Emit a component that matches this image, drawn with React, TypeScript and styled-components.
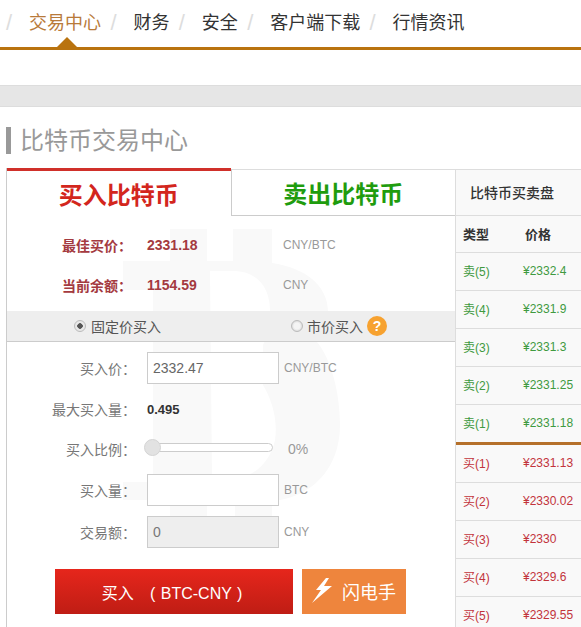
import React from "react";
import styled, { createGlobalStyle } from "styled-components";

const Global = createGlobalStyle`
  html, body { margin: 0; padding: 0; background: #fff; }
  body { font-family: "Liberation Sans", "Noto Sans CJK SC", sans-serif; overflow: hidden; }
  * { box-sizing: border-box; }
`;

const Page = styled.div`
  width: 581px;
  height: 627px;
  overflow: hidden;
`;

const Nav = styled.nav`
  height: 50px;
  border-bottom: 3px solid #b9730f;
  display: flex;
  align-items: flex-start;
  padding: 12px 0 0 6px;
`;

const NavItem = styled.div<{ $active?: boolean }>`
  position: relative;
  display: flex;
  align-items: center;
  height: 22px;
  font-size: 18px;
  line-height: 22px;
  color: ${(p) => (p.$active ? "#b87a3a" : "#333")};
  white-space: nowrap;
`;

const Slash = styled.span`
  font-size: 22px;
  color: #ddd;
  width: 23px;
  font-weight: 300;
`;

const Gap = styled.span`
  width: 9.4px;
`;

const Caret = styled.span`
  position: absolute;
  left: 28px;
  bottom: -13px;
  width: 0;
  height: 0;
  border-left: 10px solid transparent;
  border-right: 10px solid transparent;
  border-bottom: 10px solid #b9730f;
`;

const Band = styled.div`
  margin-top: 35px;
  height: 22px;
  background: #e6e6e6;
  border-top: 1px solid #ddd;
  border-bottom: 1px solid #ddd;
`;

const Title = styled.h1`
  margin: 20px 0 0 6px;
  height: 27px;
  padding-left: 9px;
  border-left: 5px solid #999;
  font-size: 24px;
  line-height: 27px;
  font-weight: 400;
  color: #999;
  white-space: nowrap;
`;

const Columns = styled.div`
  margin: 14px 0 0 6px;
  display: flex;
  align-items: flex-start;
`;

const Trade = styled.section`
  position: relative;
  width: 449px;
  height: 460px;
  border-left: 1px solid #ccc;
  flex: none;
`;

const Watermark = styled.svg`
  position: absolute;
  left: 0;
  top: 0;
  width: 449px;
  height: 460px;
`;

const Tabs = styled.div`
  position: relative;
  display: flex;
  height: 48px;
`;

const Tab = styled.div<{ $active?: boolean; $color: string }>`
  width: ${(p) => (p.$active ? "224px" : "225px")};
  height: ${(p) => (p.$active ? "48px" : "47px")};
  margin-top: ${(p) => (p.$active ? "0" : "1px")};
  border-top: ${(p) => (p.$active ? "3px solid #d0302a" : "1px solid #ddd")};
  border-left: ${(p) => (p.$active ? "none" : "1px solid #ccc")};
  border-bottom: ${(p) => (p.$active ? "none" : "1px solid #ccc")};
  background: #fff;
  color: ${(p) => p.$color};
  font-size: 24px;
  font-weight: 700;
  display: flex;
  align-items: center;
  justify-content: center;
`;

const Info = styled.div`
  position: relative;
  padding: 9px 0 6px;
`;

const InfoRow = styled.div`
  height: 40px;
  display: flex;
  align-items: center;
`;

const InfoLabel = styled.div`
  width: 125px;
  text-align: right;
  font-size: 14px;
  font-weight: 700;
  color: #a43a40;
  white-space: nowrap;
`;

const InfoValue = styled.div`
  width: 140px;
  padding-left: 15px;
  font-size: 14px;
  font-weight: 700;
  color: #a43a40;
`;

const Unit = styled.div`
  font-size: 12px;
  color: #999;
  padding-left: 5px;
  white-space: nowrap;
`;

const InfoUnit = styled(Unit)`
  padding-left: 11px;
`;

const TypeBar = styled.div`
  position: relative;
  display: grid;
  grid-template-columns: 284px 1fr;
  height: 31px;
  background: #eee;
  border-bottom: 1px solid #ccc;
  align-items: center;
  font-size: 14px;
  color: #555;
`;

const TypeOption = styled.label<{ $first?: boolean }>`
  display: flex;
  align-items: center;
  gap: ${(p) => (p.$first ? "5px" : "4px")};
  padding-left: ${(p) => (p.$first ? "67px" : "0")};
  white-space: nowrap;
`;

const Radio = styled.span<{ $on?: boolean }>`
  width: 12px;
  height: 12px;
  border-radius: 50%;
  border: 1px solid #bbb;
  background: ${(p) =>
    p.$on
      ? "radial-gradient(circle, #555 0 2.5px, #e8e8e8 3px)"
      : "radial-gradient(circle, #f4f4f4 0 3px, #dedede 5px)"};
  flex: none;
`;

const Help = styled.span`
  width: 20px;
  height: 20px;
  border-radius: 50%;
  background: #f7a230;
  color: #fff;
  font-size: 14px;
  font-weight: 700;
  display: inline-flex;
  align-items: center;
  justify-content: center;
`;

const Form = styled.div`
  position: relative;
  padding-top: 10px;
  display: flex;
  flex-direction: column;
  gap: 9px;
`;

const FormRow = styled.div<{ $shift?: number }>`
  height: 32px;
  margin-top: ${(p) => p.$shift ?? 0}px;
  display: flex;
  align-items: center;
`;

const FormLabel = styled.div`
  width: 129px;
  text-align: right;
  font-size: 14px;
  color: #777;
  white-space: nowrap;
`;

const Field = styled.input`
  margin-left: 11px;
  width: 132px;
  height: 32px;
  border: 1px solid #ccc;
  background: ${(p) => (p.disabled ? "#eee" : "#fff")};
  padding: 0 5px;
  font: 14px "Liberation Sans", sans-serif;
  color: #666;
  outline: none;
  opacity: 1;
  &:disabled { color: #777; -webkit-text-fill-color: #777; }
`;

const MaxValue = styled.div`
  margin-left: 11px;
  font-size: 13px;
  font-weight: 700;
  color: #333;
`;

const Slider = styled.div`
  position: relative;
  margin: -3px 0 0 11px;
  width: 126px;
  height: 9px;
  border: 1px solid #ccc;
  border-radius: 5px;
  background: #fff;
`;

const Thumb = styled.span`
  position: absolute;
  left: -4px;
  top: -5px;
  width: 17px;
  height: 17px;
  border-radius: 50%;
  background: #e2e2e2;
  border: 1px solid #d4d4d4;
`;

const Percent = styled.div`
  margin-left: 15px;
  font-size: 14px;
  color: #999;
`;

const Actions = styled.div`
  position: relative;
  margin-top: 21px;
  padding-left: 48px;
  display: flex;
  gap: 9px;
`;

const BuyButton = styled.button`
  width: 238px;
  height: 45px;
  border: none;
  padding: 0 4px 0 0;
  background: linear-gradient(#e6261c, #bf1d14);
  color: #fff;
  font: 16px "Liberation Sans", "Noto Sans CJK SC", sans-serif;
  white-space: pre;
  word-spacing: 1px;
`;

const FlashButton = styled.button`
  width: 104px;
  height: 45px;
  border: none;
  background: #ee853d;
  color: #fff;
  font: 18px "Liberation Sans", "Noto Sans CJK SC", sans-serif;
  display: flex;
  align-items: center;
  gap: 10px;
  padding: 0 0 2px 10px;
`;

const Book = styled.aside`
  flex: 1;
  border-left: 1px solid #ddd;
  margin-top: 1px;
  background: #f9f9f9;
  border-top: 1px solid #ddd;
`;

const BookTitle = styled.div`
  height: 46px;
  padding: 0 0 2px 14px;
  display: flex;
  align-items: center;
  font-size: 14px;
  font-weight: 500;
  color: #333;
  border-bottom: 1px solid #ddd;
  white-space: nowrap;
`;

const BookRow = styled.div<{ $color?: string; $strong?: boolean; $thick?: boolean }>`
  height: ${(p) => (p.$thick ? "40px" : p.$strong ? "37px" : "38px")};
  display: grid;
  grid-template-columns: ${(p) => (p.$strong ? "62px" : "60px")} 1fr;
  align-items: center;
  padding: 0 0 2px 7px;
  font-size: ${(p) => (p.$strong ? "13px" : "12px")};
  font-weight: ${(p) => (p.$strong ? 700 : 400)};
  color: ${(p) => p.$color ?? "#333"};
  border-bottom: ${(p) => (p.$thick ? "3px solid #b5702a" : "1px solid #ddd")};
  white-space: nowrap;
`;

const GREEN = "#3f9a3f";
const RED = "#c2333b";

const sells = [
  ["卖(5)", "¥2332.4"],
  ["卖(4)", "¥2331.9"],
  ["卖(3)", "¥2331.3"],
  ["卖(2)", "¥2331.25"],
  ["卖(1)", "¥2331.18"],
];
const buys = [
  ["买(1)", "¥2331.13"],
  ["买(2)", "¥2330.02"],
  ["买(3)", "¥2330"],
  ["买(4)", "¥2329.6"],
  ["买(5)", "¥2329.55"],
];

export default function App() {
  return (
    <Page>
      <Global />
      <Nav>
        <NavItem><Slash>/</Slash></NavItem>
        <NavItem $active>交易中心<Caret /></NavItem>
        <Gap /><NavItem><Slash>/</Slash></NavItem>
        <NavItem>财务</NavItem>
        <Gap /><NavItem><Slash>/</Slash></NavItem>
        <NavItem>安全</NavItem>
        <Gap /><NavItem><Slash>/</Slash></NavItem>
        <NavItem>客户端下载</NavItem>
        <Gap /><NavItem><Slash>/</Slash></NavItem>
        <NavItem>行情资讯</NavItem>
      </Nav>
      <Band />
      <Title>比特币交易中心</Title>
      <Columns>
        <Trade>
          <Watermark viewBox="7 168 449 460">
            <path
              fill="#f9f9f9"
              fillRule="evenodd"
              d="M170 229H207V261H233V229H272V263C305 268 328 285 328 312C328 325 323 335 317 342C332 360 340 395 340 425C340 470 310 498 272 501V516H235V501H207V516H170V500H123V482H153V290H123V261H170ZM210 271H235C258 272 270 288 270 311V330L263 345V385C272 400 278 420 275 440C270 465 250 478 235 478H212Z"
            />
          </Watermark>
          <Tabs>
            <Tab $active $color="#d3261d">买入比特币</Tab>
            <Tab $color="#1f9c0e">卖出比特币</Tab>
          </Tabs>
          <Info>
            <InfoRow>
              <InfoLabel>最佳买价：</InfoLabel>
              <InfoValue>2331.18</InfoValue>
              <InfoUnit>CNY/BTC</InfoUnit>
            </InfoRow>
            <InfoRow>
              <InfoLabel>当前余额：</InfoLabel>
              <InfoValue>1154.59</InfoValue>
              <InfoUnit>CNY</InfoUnit>
            </InfoRow>
          </Info>
          <TypeBar>
            <TypeOption $first><Radio $on />固定价买入</TypeOption>
            <TypeOption><Radio />市价买入<Help>?</Help></TypeOption>
          </TypeBar>
          <Form>
            <FormRow>
              <FormLabel>买入价：</FormLabel>
              <Field defaultValue="2332.47" />
              <Unit>CNY/BTC</Unit>
            </FormRow>
            <FormRow>
              <FormLabel>最大买入量：</FormLabel>
              <MaxValue>0.495</MaxValue>
            </FormRow>
            <FormRow $shift={-1}>
              <FormLabel>买入比例：</FormLabel>
              <Slider><Thumb /></Slider>
              <Percent>0%</Percent>
            </FormRow>
            <FormRow>
              <FormLabel>买入量：</FormLabel>
              <Field />
              <Unit>BTC</Unit>
            </FormRow>
            <FormRow $shift={1}>
              <FormLabel>交易额：</FormLabel>
              <Field disabled defaultValue="0" />
              <Unit>CNY</Unit>
            </FormRow>
          </Form>
          <Actions>
            <BuyButton>买入   ( BTC-CNY )</BuyButton>
            <FlashButton>
              <svg width="20" height="25" viewBox="0 0 20 25">
                <path fill="#fff" d="M14 0L4 12H9L0 25L20 8H12L17 0Z" />
              </svg>
              闪电手
            </FlashButton>
          </Actions>
        </Trade>
        <Book>
          <BookTitle>比特币买卖盘</BookTitle>
          <BookRow $strong><span>类型</span><span>价格</span></BookRow>
          {sells.map(([a, b], i) => (
            <BookRow key={a} $color={GREEN} $thick={i === 4}><span>{a}</span><span>{b}</span></BookRow>
          ))}
          {buys.map(([a, b]) => (
            <BookRow key={a} $color={RED}><span>{a}</span><span>{b}</span></BookRow>
          ))}
        </Book>
      </Columns>
    </Page>
  );
}
